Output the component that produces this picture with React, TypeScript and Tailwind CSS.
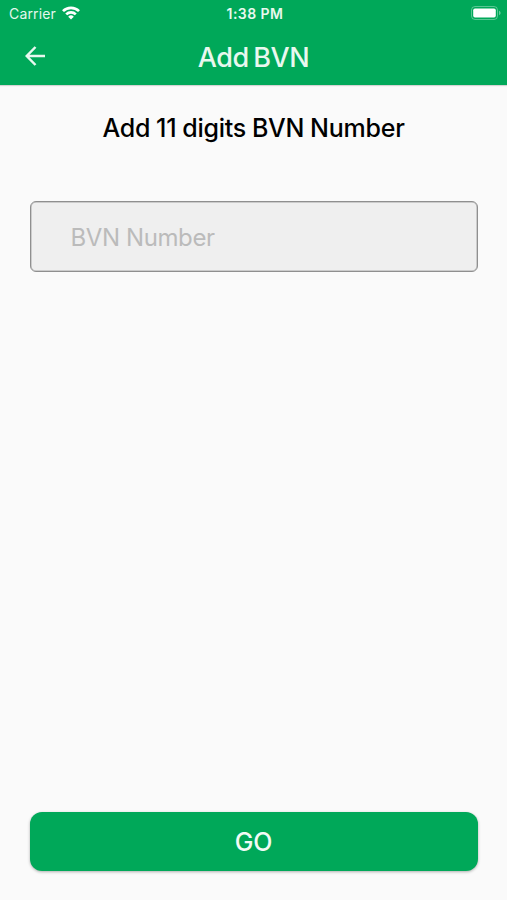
import { useState } from 'react';

function WifiIcon() {
  return (
    <svg width="18" height="14" viewBox="0 0 18 14" fill="white">
      <path d="M9 13.6 6.2 10.7a4 4 0 0 1 5.600 0z" />
      <path
        d="M4.2 8.4a6.800 6.800 0 0 1 9.600 0M1 5.1a11.300 11.300 0 0 1 16 0"
        fill="none"
        stroke="white"
        strokeWidth="2.7"
      />
    </svg>
  );
}

function BatteryIcon() {
  return (
    <svg width="30" height="14" viewBox="0 0 30 14" fill="none">
      <rect x="0.5" y="0.5" width="26" height="13" rx="3.5" stroke="white" strokeOpacity="0.35" />
      <rect x="2.2" y="2.4" width="22.600" height="9.2" rx="1.8" fill="white" />
      <path d="M28 4.8c1 .4 1.600 1.200 1.600 2.200S29 8.800 28 9.200z" fill="white" fillOpacity="0.4" />
    </svg>
  );
}

function StatusBar() {
  return (
    <div className="grid h-[26px] grid-cols-3 items-center pl-[9px] pr-[6px] text-white">
      <div className="flex items-center gap-1.5">
        <span className="pt-0.5 text-[14px] leading-5 tracking-[0.15px] text-[#e4f7ed]">Carrier</span>
        <WifiIcon />
      </div>
      <span className="pt-0.5 text-center text-[14px] leading-5 font-semibold tracking-[0.45px] text-[#e8f8ef]">
        1:38 PM
      </span>
      <div className="flex justify-end">
        <BatteryIcon />
      </div>
    </div>
  );
}

export default function App() {
  const [bvn, setBvn] = useState('');

  return (
    <div className="flex h-[900px] w-full flex-col bg-[#fafafa] font-['Inter',sans-serif]">
      {/* Header */}
      <header className="h-[85px] bg-[#00a859] shadow-[0_1px_1px_rgba(0,0,0,0.15)]">
        <StatusBar />
        <div className="grid h-[59px] grid-cols-[70px_1fr_70px] items-center text-white">
          <button type="button" aria-label="Back" className="flex justify-center">
            <svg width="20" height="20" viewBox="0 0 20 20" fill="none" stroke="#e8f8ef" strokeWidth="2.5">
              <path d="M20 10H2M10.500 1 1.700 10l8.800 9" />
            </svg>
          </button>
          <h1 className="pt-[5px] text-center text-[27px] font-medium tracking-[-0.5px] [word-spacing:-2px] text-[#e8f8ef]">
            Add BVN
          </h1>
        </div>
      </header>

      {/* Form */}
      <main className="flex flex-1 flex-col px-[29.5px] pb-[29px]">
        <h2 className="mt-[27px] text-center text-[25px] leading-8 font-medium tracking-[-0.25px] [word-spacing:-0.5px] text-black">
          Add 11 digits BVN Number
        </h2>
        <input
          value={bvn}
          onChange={(e) => setBvn(e.target.value)}
          placeholder="BVN Number"
          inputMode="numeric"
          maxLength={11}
          className="mt-[57px] h-[71px] w-full rounded-md border border-[#8f8f8f] bg-[#efefef] px-10 pt-px text-[24px] tracking-[-0.4px] text-black shadow-[inset_0_0_0_0.5px_#a8a8a8] outline-none placeholder:text-[#bbbbbb]"
        />
        <button
          type="button"
          className="mt-auto h-[59px] w-full rounded-xl bg-[#00a859] pt-[3px] text-[25px] font-medium tracking-[-0.3px] text-[#f2fbf6] shadow-[0_1px_3px_rgba(0,0,0,0.3)]"
        >
          GO
        </button>
      </main>
    </div>
  );
}
